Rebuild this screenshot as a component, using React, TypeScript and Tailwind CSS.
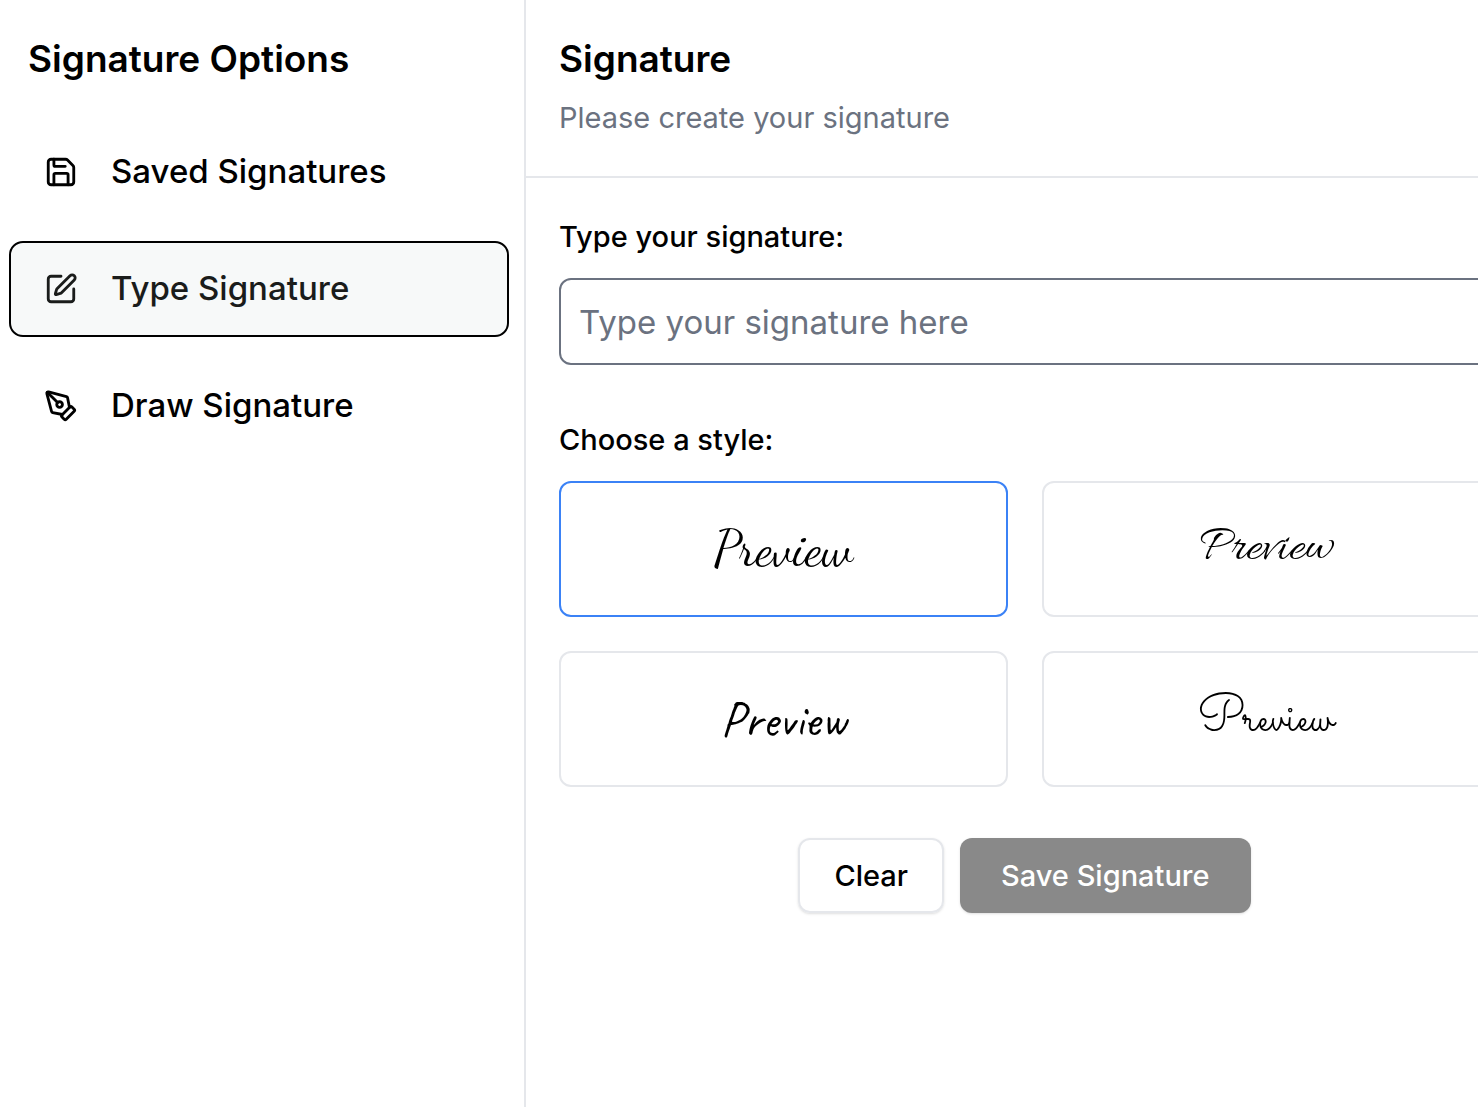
import React, { useState } from 'react';
import { PenTool, Save, SquarePen } from 'lucide-react';

const menuItems = [
  { id: 'saved', label: 'Saved Signatures', icon: Save },
  { id: 'type', label: 'Type Signature', icon: SquarePen },
  { id: 'draw', label: 'Draw Signature', icon: PenTool },
];

const signatureStyles = [
  { id: 'dancing', className: "font-['Dancing_Script','Liberation_Serif',cursive]" },
  { id: 'allura', className: "font-['Allura','Liberation_Serif',cursive]" },
  { id: 'caveat', className: "font-['Caveat','Lato',cursive]" },
  { id: 'sacramento', className: "font-['Sacramento','Liberation_Serif',cursive]" },
];

function Sidebar() {
  const [active, setActive] = useState('type');

  return (
    <aside className="w-[526px] shrink-0 border-r-2 border-[#e5e7eb] pt-[30px] pr-[15px] pl-[9px]">
      <h2 className="pl-[19px] text-[37px] leading-[58px] font-semibold">Signature Options</h2>
      <nav className="mt-9 flex flex-col gap-[21px]">
        {menuItems.map(({ id, label, icon: Icon }) => (
          <button
            key={id}
            type="button"
            onClick={() => setActive(id)}
            className={`flex h-24 items-center gap-[33px] rounded-[14px] border-2 px-[33px] text-[33px] font-medium ${
              active === id ? 'border-black bg-[#f7f9f9] text-[#1a1c1b]' : 'border-transparent'
            }`}
          >
            <Icon size={34} />
            {label}
          </button>
        ))}
      </nav>
    </aside>
  );
}

function TypeSignatureForm() {
  const [text, setText] = useState('');
  const [style, setStyle] = useState('dancing');

  return (
    <form className="-mr-3 pt-[38px] pl-[33px]">
      <label htmlFor="signature" className="block text-[29px] leading-[42px] font-medium">
        Type your signature:
      </label>
      <input
        id="signature"
        type="text"
        value={text}
        onChange={(e) => setText(e.target.value)}
        placeholder="Type your signature here"
        className="mt-5 block h-[87px] w-full rounded-[12px] border-2 border-[#6b7280] px-[18px] text-[33px] placeholder:text-[#6b7280]"
      />

      <h3 className="mt-[54px] text-[29px] leading-[42px] font-medium">Choose a style:</h3>
      <div className="mt-5 grid grid-cols-2 gap-[34px]">
        {signatureStyles.map((s) => (
          <button
            key={s.id}
            type="button"
            onClick={() => setStyle(s.id)}
            className={`flex h-[136px] items-center justify-center rounded-[12px] border-2 text-[50px] ${
              style === s.id ? 'border-[#3b82f6]' : 'border-[#e5e7eb]'
            }`}
          >
            <span className={s.className}>{text || 'Preview'}</span>
          </button>
        ))}
      </div>

      <div className="mt-[51px] flex justify-center gap-4">
        <button
          type="button"
          onClick={() => setText('')}
          className="h-[75px] rounded-[12px] border-2 border-[#e5e7eb] px-[34px] text-[29px] font-medium shadow-sm"
        >
          Clear
        </button>
        <button
          type="button"
          disabled={!text}
          className="h-[75px] rounded-[12px] bg-[#171717] px-[41px] text-[29px] font-medium text-white shadow-sm disabled:bg-[#898989]"
        >
          Save Signature
        </button>
      </div>
    </form>
  );
}

export default function App() {
  return (
    <div className="flex min-h-screen bg-white font-['Inter',sans-serif] text-black">
      <Sidebar />
      <main className="min-w-0 flex-1 overflow-hidden">
        <header className="border-b-2 border-[#e5e7eb] pt-[30px] pb-[37px] pl-[33px]">
          <h1 className="text-[37px] leading-[58px] font-semibold">Signature</h1>
          <p className="mt-[9px] text-[29px] leading-[42px] text-[#6b7280]">Please create your signature</p>
        </header>
        <TypeSignatureForm />
      </main>
    </div>
  );
}
